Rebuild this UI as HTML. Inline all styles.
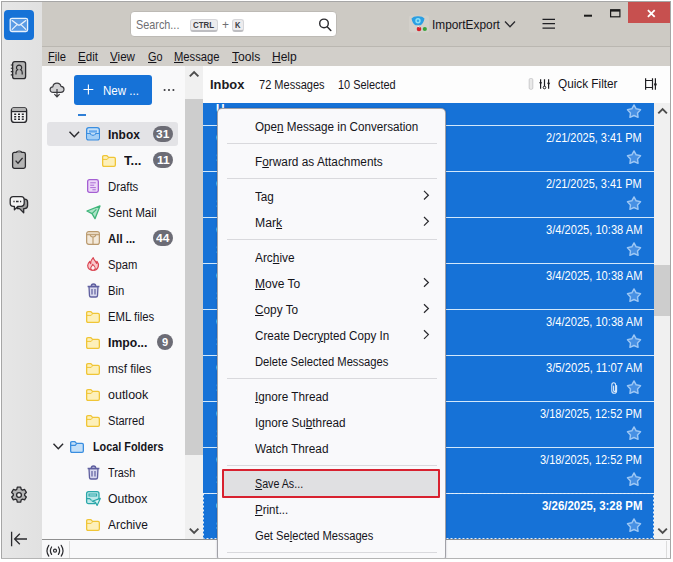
<!DOCTYPE html>
<html><head><meta charset="utf-8"><title>Inbox</title>
<style>
html,body{margin:0;padding:0;}
body{width:673px;height:562px;position:relative;overflow:hidden;background:#fff;font-family:"Liberation Sans",sans-serif;}
.a{position:absolute;}
.t{position:absolute;white-space:nowrap;line-height:16px;height:16px;transform-origin:0 50%;}
.t u{text-decoration:underline;text-underline-offset:1px;text-decoration-thickness:1px;}
svg{position:absolute;overflow:visible;}
#win{left:1px;top:1px;width:670px;height:558px;background:#a6a6a6;}
#spaces{left:2px;top:2px;width:40px;height:556px;background:linear-gradient(90deg,#e6e6e6,#e1e1e1);}
#title{left:42px;top:2px;width:628px;height:44px;background:#cdcac4;}
#menubar{left:42px;top:46px;width:628px;height:20px;background:#d2cfca;border-top:1px solid #bab7b1;box-sizing:border-box;}
#fpane{left:42px;top:66px;width:144px;height:474px;background:#f9f9fa;}
#fscroll{left:185.300px;top:66px;width:17.300px;height:474px;background:#f0f0f0;}
#fthumb{left:185.300px;top:99px;width:17.300px;height:356px;background:#cdcdcd;}
#hdr{left:203px;top:66px;width:467px;height:37px;background:#fdfdfd;}
#list{left:202.600px;top:103px;width:451.400px;height:437px;background:#1672d7;}
.sep{position:absolute;left:203px;width:451px;height:1px;background:#d2e8fb;}
#lscroll{left:654px;top:103px;width:16px;height:437px;background:#f0f0f0;}
#lthumb{left:654px;top:265px;width:16px;height:51px;background:#cdcdcd;}
#status{left:42px;top:539px;width:628px;height:19px;background:#f9f9fa;border-top:1px solid #8f8f8f;box-sizing:border-box;}
#search{left:130px;top:10.5px;width:207px;height:26px;background:#fff;border:1px solid #bdbab5;border-radius:4px;box-sizing:border-box;}
.kbd{background:#ececee;border:1px solid #d6d6d9;border-bottom:2px solid #bdbdc1;border-radius:3px;box-sizing:border-box;}
#close{left:628px;top:2px;width:42px;height:21px;background:#c7504f;}
#newbtn{left:74px;top:75px;width:78px;height:30px;background:#1672d7;border-radius:3px;}
#inboxrow{left:47px;top:122px;width:131px;height:24px;background:#e3e3e6;border-radius:3px;}
.badge{position:absolute;left:152.800px;width:20.200px;height:15.600px;border-radius:8px;background:#6c6c75;}
#menu{left:217px;top:108px;width:229px;height:453px;background:#f9f9fb;border:1px solid rgba(40,40,50,.42);border-radius:5px;box-sizing:border-box;box-shadow:0 0 2px 0 rgba(0,10,50,.25);}
.msep{position:absolute;left:227px;width:210px;height:1px;background:#d9d9dd;}
#saveas{left:221.800px;top:469.300px;width:218.400px;height:28.400px;background:#e0e0e2;border:2px solid #d8212f;box-sizing:border-box;border-radius:1px;}
#below{left:0;top:558px;width:673px;height:4px;background:#fff;border-top:1px solid #b4b4b4;box-sizing:border-box;}
#belowl{left:0;top:558px;width:1px;height:1px;background:#fff;}
#belowr{left:671px;top:558px;width:2px;height:1px;background:#fff;}

</style></head>
<body>
<div class="a" id="win"></div>
<div class="a" id="spaces"></div>
<div class="a" id="title"></div>
<div class="a" id="menubar"></div>
<div class="a" id="fpane"></div>
<div class="a" id="fscroll"></div>
<div class="a" id="fthumb"></div>
<div class="a" id="hdr"></div>
<div class="a" id="list"></div>
<div class="sep" style="top:125px"></div>
<div class="sep" style="top:171px"></div>
<div class="sep" style="top:217px"></div>
<div class="sep" style="top:263px"></div>
<div class="sep" style="top:309px"></div>
<div class="sep" style="top:355px"></div>
<div class="sep" style="top:401px"></div>
<div class="sep" style="top:447px"></div>
<div class="sep" style="top:493px"></div>
<div class="a" id="lscroll"></div>
<div class="a" id="lthumb"></div>
<div class="a" id="status"></div>
<div class="a" id="search"></div>
<div class="a kbd" style="left:189.5px;top:18.5px;width:28px;height:13px"></div>
<div class="a kbd" style="left:232px;top:18.5px;width:12px;height:13px"></div>
<div class="a" id="close"></div>
<div class="a" id="newbtn"></div>
<div class="a" id="inboxrow"></div>
<div class="badge" style="top:126px"></div>
<div class="badge" style="top:152.200px"></div>
<div class="badge" style="top:230.200px"></div>
<div class="badge" style="top:334.200px;left:156.900px;width:15.700px"></div>
<!-- mail space button -->
<div class="a" style="left:4px;top:10px;width:30px;height:30px;background:#1672d7;border-radius:4px"></div>
<svg style="left:9px;top:17px" width="20" height="16" viewBox="0 0 20 16"><rect x="1.2" y="1.3" width="17.4" height="13.2" rx="1.8" fill="#5a9be4" stroke="#e8f1fc" stroke-width="1.3"/><path d="M3.2 3.6 L8.6 7.6 Q10 8.5 11.4 7.6 L16.8 3.6 M3.2 12.4 L8 7.6 M16.8 12.4 L12 7.6" fill="none" stroke="#e8f1fc" stroke-width="1.3" stroke-linecap="round"/></svg>
<!-- address book -->
<svg style="left:10px;top:60px" width="18" height="20" viewBox="0 0 18 20"><rect x="2.6" y="1.6" width="13" height="17" rx="2.2" fill="#b4b4b4" stroke="#2a2a2e" stroke-width="1.3"/><path d="M0.8 5h2.4M0.8 8.3h2.4M0.8 11.6h2.4M0.8 14.9h2.4" stroke="#2a2a2e" stroke-width="1.1"/><path d="M6 14.6v-2.2q0-2 1.6-2.6a2.6 2.6 0 1 1 3 0q1.6.6 1.6 2.6v2.2" fill="none" stroke="#2a2a2e" stroke-width="1.2"/></svg>
<!-- calendar -->
<svg style="left:10px;top:106px" width="18" height="18" viewBox="0 0 18 18"><rect x="1.4" y="1.6" width="15.2" height="14.8" rx="3" fill="#f4f4f4" stroke="#2a2a2e" stroke-width="1.4"/><path d="M1.6 5.4h14.8" stroke="#2a2a2e" stroke-width="1.6"/><path d="M2 3.6q0-1.8 2-1.8h10q2 0 2 1.8v1.2H2z" fill="#b4b4b4"/><path d="M4.2 8.3h2M8 8.3h2M11.8 8.3h2M4.2 10.8h2M8 10.8h2M11.8 10.8h2M4.2 13.3h2M8 13.3h2M11.8 13.3h2" stroke="#2a2a2e" stroke-width="1.4"/></svg>
<!-- tasks -->
<svg style="left:11px;top:150px" width="16" height="20" viewBox="0 0 16 20"><rect x="1.6" y="2.4" width="12.8" height="16" rx="1.8" fill="#b4b4b4" stroke="#2a2a2e" stroke-width="1.3"/><path d="M5.4 2.6q0-1.6 2.6-1.6t2.6 1.6" fill="#e4e4e4" stroke="#2a2a2e" stroke-width="1.1"/><path d="M4.6 10.6l2.4 2.6 4.6-5.4" fill="none" stroke="#2a2a2e" stroke-width="1.3"/></svg>
<!-- chat -->
<svg style="left:9px;top:195px" width="20" height="20" viewBox="0 0 20 20"><path d="M13 4.200h2.600q3 0 3 3v3.400q0 3-3 3h-.9v4.200l-4.200-4.200H8z" fill="#a0a0a0" stroke="#2a2a2e" stroke-width="1.300" stroke-linejoin="round"/><path d="M4.200 1.700h8q3 0 3 3v3.600q0 3-3 3H9l-3.600 3.500v-3.500H4.200q-3 0-3-3V4.700q0-3 3-3z" fill="#f4f4f4" stroke="#2a2a2e" stroke-width="1.300" stroke-linejoin="round"/><path d="M4.400 6.500h1.200M7 6.500h2.600M11 6.500h1.200" stroke="#2a2a2e" stroke-width="1.300"/></svg>
<!-- gear -->
<svg style="left:10px;top:486px" width="18" height="18" viewBox="0 0 18 18"><path d="M7.300 1.200h3.400l.5 2.200 1.300.750 2.150-.7 1.700 2.950-1.650 1.500v1.500l1.650 1.500-1.700 2.950-2.150-.7-1.300.75-.5 2.200H7.300l-.5-2.200-1.300-.75-2.150.7-1.700-2.950 1.650-1.500v-1.500L1.650 6.400l1.700-2.950 2.150.7 1.300-.75z" fill="#b4b4b4" stroke="#2a2a2e" stroke-width="1.300" stroke-linejoin="round"/><circle cx="9" cy="9" r="2.400" fill="#ededed" stroke="#2a2a2e" stroke-width="1.300"/></svg>
<!-- collapse -->
<svg style="left:10px;top:531px" width="18" height="16" viewBox="0 0 18 16"><path d="M1.600 0.800v14.400M4.600 8h12.400M9.800 2.800L4.600 8l5.200 5.200" fill="none" stroke="#2a2a2e" stroke-width="1.300"/></svg>
<!-- cloud get messages -->
<svg style="left:49px;top:82px" width="16" height="16" viewBox="0 0 16 16"><path d="M4.300 10.300q-3.200 0-3.200-2.800 0-2.500 2.700-2.700.6-3.600 4.200-3.600 3.300 0 4 3.100 3 .2 3 3 0 3-3.300 3z" fill="#d2d2d4" stroke="#3a3a3e" stroke-width="1.200" stroke-linejoin="round"/><path d="M8 7v7.600M5.400 12.200L8 14.800l2.600-2.600" fill="none" stroke="#3a3a3e" stroke-width="1.200"/></svg>
<!-- plus -->
<svg style="left:83px;top:84px" width="11" height="11" viewBox="0 0 11 11"><path d="M5.400 0.600v9.800M0.500 5.500h9.800" stroke="#fff" stroke-width="1.100" fill="none"/></svg>
<!-- dots -->
<svg style="left:163px;top:88.300px" width="12" height="4" viewBox="0 0 12 4"><circle cx="1.600" cy="2" r="1.050" fill="#3a3a3e"/><circle cx="6" cy="2" r="1.050" fill="#3a3a3e"/><circle cx="10.400" cy="2" r="1.050" fill="#3a3a3e"/></svg>
<!-- blue dash -->
<div class="a" style="left:78px;top:114px;width:8px;height:1.500px;background:#2f7fd6"></div>
<!-- chevrons -->
<svg style="left:69px;top:131px" width="11" height="7" viewBox="0 0 11 7"><path d="M0.500 0.700L5.300 5.800 10.100 0.700" fill="none" stroke="#2a2a2e" stroke-width="1.400"/></svg>
<svg style="left:53px;top:443px" width="11" height="7" viewBox="0 0 11 7"><path d="M0.500 0.700L5.300 5.800 10.100 0.700" fill="none" stroke="#2a2a2e" stroke-width="1.400"/></svg>
<!-- inbox icon -->
<svg style="left:86px;top:127px" width="14" height="14" viewBox="0 0 14 14"><rect x="0.650" y="0.650" width="12.700" height="12.300" rx="2.200" fill="#c3dff8" stroke="#3a8ee0" stroke-width="1.300"/><path d="M3 3.300h8v2.300H3z" fill="#63a8ec"/><path d="M1 6.500h3.200q.3 1.800 2.800 1.800t2.800-1.800H13" fill="none" stroke="#3a8ee0" stroke-width="1.200"/><path d="M1.300 7.100h2.500q.6 1.800 3.200 1.800t3.200-1.800h2.500v4.200q0 1-1 1H2.300q-1 0-1-1z" fill="#a4cff5"/></svg>
<!-- folder T -->
<svg style="left:102px;top:154.500px" width="14" height="12" viewBox="0 0 14 12"><path d="M0.650 2q0-1.300 1.300-1.300h3l1.600 1.700h5.500q1.300 0 1.300 1.300v6.300q0 1.300-1.300 1.300H1.950q-1.300 0-1.300-1.300z" fill="#fdf0ba" stroke="#f0c536" stroke-width="1.300" stroke-linejoin="round"/><path d="M0.800 4.400h4.400l1.400-1.700" fill="none" stroke="#f0c536" stroke-width="1"/></svg>
<!-- drafts -->
<svg style="left:87px;top:179px" width="12" height="14" viewBox="0 0 12 14"><rect x="0.650" y="0.650" width="10.700" height="12.700" rx="1.800" fill="#ecd8f8" stroke="#a55fd3" stroke-width="1.300"/><path d="M3.200 3.800h5.600M3.200 6.200h4M3.200 8.600h5.600M5.400 10.800h3.400" stroke="#a55fd3" stroke-width="0.900"/></svg>
<!-- sent -->
<svg style="left:86px;top:205px" width="15" height="15" viewBox="0 0 15 15"><path d="M14 0.900L9 13.700 6 8.600 0.900 6z" fill="#aee4c8" stroke="#3fb57a" stroke-width="1.300" stroke-linejoin="round"/><path d="M6 8.600L10.400 4.400" stroke="#3fb57a" stroke-width="1.100"/></svg>
<!-- all mail -->
<svg style="left:86px;top:231px" width="14" height="14" viewBox="0 0 14 14"><rect x="0.650" y="0.650" width="12.700" height="12.700" rx="2.200" fill="#f3e9da" stroke="#b9986b" stroke-width="1.200"/><path d="M1 3.700h12" stroke="#b9986b" stroke-width="1.100"/><path d="M4.200 3.800q.2 2 2.800 2.300 2.600-.3 2.800-2.300M7 6.200v7" fill="none" stroke="#b9986b" stroke-width="1.100"/><path d="M1.600 2h10.800" stroke="#e2d0b4" stroke-width="1.300"/></svg>
<!-- spam -->
<svg style="left:87px;top:257px" width="12" height="14" viewBox="0 0 12 14"><path d="M6.200 0.700C6.600 3 8.800 4 9.600 6.400C10.100 5.700 10.200 5 10 4.300C11.500 6 11.700 8 11.300 9.500C10.700 11.900 8.900 13.300 6 13.300C3 13.300 0.700 11.400 0.700 8.600C0.700 6.600 1.900 5.200 2.800 4.300C2.800 5.400 3.100 6.200 3.700 6.600C3.700 4 4.700 2.200 6.200 0.700Z" fill="#f9c6ca" stroke="#da4552" stroke-width="1.200" stroke-linejoin="round"/><path d="M6 13.200C4.300 13.200 3.500 12 3.800 10.700C4.100 9.500 5.300 8.900 5.700 7.300C7.100 8.500 8.500 9.900 8.300 11.400C8.100 12.600 7.200 13.200 6 13.200Z" fill="#fdf3f4" stroke="#da4552" stroke-width="1.100" stroke-linejoin="round"/></svg>
<!-- bin -->
<svg style="left:87px;top:282.500px" width="13" height="15" viewBox="0 0 13 15"><path d="M2 3.600h9l-.5 9q-.1 1.400-1.500 1.400H4q-1.400 0-1.500-1.400z" fill="#d9d9ee" stroke="#5f5f9f" stroke-width="1.300" stroke-linejoin="round"/><path d="M0.600 3.500h11.800M4.200 3.300q0-2.300 2.300-2.300t2.300 2.300" fill="#c9c9e6" stroke="#5f5f9f" stroke-width="1.300"/><path d="M5 6v5.500M8 6v5.500" stroke="#5f5f9f" stroke-width="1.200"/></svg>
<!-- trash -->
<svg style="left:87px;top:465px" width="13" height="15" viewBox="0 0 13 15"><path d="M2 3.600h9l-.5 9q-.1 1.400-1.500 1.400H4q-1.400 0-1.500-1.400z" fill="#d9d9ee" stroke="#5f5f9f" stroke-width="1.300" stroke-linejoin="round"/><path d="M0.600 3.500h11.800M4.200 3.300q0-2.300 2.300-2.300t2.300 2.300" fill="#c9c9e6" stroke="#5f5f9f" stroke-width="1.300"/><path d="M5 6v5.500M8 6v5.500" stroke="#5f5f9f" stroke-width="1.200"/></svg>
<!-- outbox -->
<svg style="left:86px;top:491px" width="15" height="15" viewBox="0 0 15 15"><path d="M2.600 0.700h8.400q2 0 2 2v4.600L9 12.600H2.600q-2 0-2-2V2.700q0-2 2-2z" fill="#bfe9ea" stroke="#2ba7a9" stroke-width="1.300" stroke-linejoin="round"/><path d="M3 3h7.600v2H3zM0.800 7.600h3q.5 1.600 2.400 1.600" fill="none" stroke="#2ba7a9" stroke-width="1.100"/><path d="M14.300 7.400l-3.200 7-1.500-3-3.300-1.200z" fill="#dff5f5" stroke="#2ba7a9" stroke-width="1.200" stroke-linejoin="round"/></svg>
<!-- local folders -->
<svg style="left:70px;top:440.500px" width="14" height="12" viewBox="0 0 14 12"><path d="M0.650 2q0-1.300 1.300-1.300h3l1.600 1.700h5.500q1.300 0 1.300 1.300v6.300q0 1.300-1.300 1.300H1.950q-1.300 0-1.300-1.300z" fill="#c3dff8" stroke="#3a8ee0" stroke-width="1.300" stroke-linejoin="round"/><path d="M0.800 4.400h4.400l1.400-1.700" fill="none" stroke="#3a8ee0" stroke-width="1.100"/></svg>
<svg style="left:86px;top:310.5px" width="14" height="12" viewBox="0 0 14 12"><path d="M0.650 2q0-1.300 1.300-1.300h3l1.600 1.700h5.500q1.300 0 1.300 1.300v6.300q0 1.300-1.300 1.300H1.950q-1.300 0-1.300-1.300z" fill="#fdf0ba" stroke="#f0c536" stroke-width="1.300" stroke-linejoin="round"/><path d="M0.800 4.400h4.400l1.400-1.700" fill="none" stroke="#f0c536" stroke-width="1"/></svg>
<svg style="left:86px;top:336.5px" width="14" height="12" viewBox="0 0 14 12"><path d="M0.650 2q0-1.300 1.300-1.300h3l1.600 1.700h5.500q1.300 0 1.300 1.300v6.300q0 1.300-1.300 1.300H1.950q-1.300 0-1.300-1.300z" fill="#fdf0ba" stroke="#f0c536" stroke-width="1.300" stroke-linejoin="round"/><path d="M0.800 4.400h4.400l1.400-1.700" fill="none" stroke="#f0c536" stroke-width="1"/></svg>
<svg style="left:86px;top:362.5px" width="14" height="12" viewBox="0 0 14 12"><path d="M0.650 2q0-1.300 1.300-1.300h3l1.600 1.700h5.500q1.300 0 1.300 1.300v6.300q0 1.300-1.300 1.300H1.950q-1.300 0-1.300-1.300z" fill="#fdf0ba" stroke="#f0c536" stroke-width="1.300" stroke-linejoin="round"/><path d="M0.800 4.400h4.400l1.400-1.700" fill="none" stroke="#f0c536" stroke-width="1"/></svg>
<svg style="left:86px;top:388.5px" width="14" height="12" viewBox="0 0 14 12"><path d="M0.650 2q0-1.300 1.300-1.300h3l1.600 1.700h5.500q1.300 0 1.300 1.300v6.300q0 1.300-1.300 1.300H1.950q-1.300 0-1.300-1.300z" fill="#fdf0ba" stroke="#f0c536" stroke-width="1.300" stroke-linejoin="round"/><path d="M0.800 4.400h4.400l1.400-1.700" fill="none" stroke="#f0c536" stroke-width="1"/></svg>
<svg style="left:86px;top:414.5px" width="14" height="12" viewBox="0 0 14 12"><path d="M0.650 2q0-1.300 1.300-1.300h3l1.600 1.700h5.500q1.300 0 1.300 1.300v6.300q0 1.300-1.300 1.300H1.950q-1.300 0-1.300-1.300z" fill="#fdf0ba" stroke="#f0c536" stroke-width="1.300" stroke-linejoin="round"/><path d="M0.800 4.400h4.400l1.400-1.700" fill="none" stroke="#f0c536" stroke-width="1"/></svg>
<svg style="left:86px;top:518.5px" width="14" height="12" viewBox="0 0 14 12"><path d="M0.650 2q0-1.300 1.300-1.300h3l1.600 1.700h5.500q1.300 0 1.300 1.300v6.300q0 1.300-1.300 1.300H1.950q-1.300 0-1.300-1.300z" fill="#fdf0ba" stroke="#f0c536" stroke-width="1.300" stroke-linejoin="round"/><path d="M0.800 4.400h4.400l1.400-1.700" fill="none" stroke="#f0c536" stroke-width="1"/></svg>
<svg style="left:0;top:0" width="673" height="562" viewBox="0 0 673 562">
<polygon points="634.00,104.90 636.17,108.81 640.56,109.67 637.52,112.94 638.06,117.38 634.00,115.50 629.94,117.38 630.48,112.94 627.44,109.67 631.83,108.81" fill="#4790e3" stroke="#9dc7f4" stroke-width="1.4" stroke-linejoin="round"/>
<polygon points="634.00,150.90 636.17,154.81 640.56,155.67 637.52,158.94 638.06,163.38 634.00,161.50 629.94,163.38 630.48,158.94 627.44,155.67 631.83,154.81" fill="#4790e3" stroke="#9dc7f4" stroke-width="1.4" stroke-linejoin="round"/>
<polygon points="634.00,196.90 636.17,200.81 640.56,201.67 637.52,204.94 638.06,209.38 634.00,207.50 629.94,209.38 630.48,204.94 627.44,201.67 631.83,200.81" fill="#4790e3" stroke="#9dc7f4" stroke-width="1.4" stroke-linejoin="round"/>
<polygon points="634.00,242.90 636.17,246.81 640.56,247.67 637.52,250.94 638.06,255.38 634.00,253.50 629.94,255.38 630.48,250.94 627.44,247.67 631.83,246.81" fill="#4790e3" stroke="#9dc7f4" stroke-width="1.4" stroke-linejoin="round"/>
<polygon points="634.00,288.90 636.17,292.81 640.56,293.67 637.52,296.94 638.06,301.38 634.00,299.50 629.94,301.38 630.48,296.94 627.44,293.67 631.83,292.81" fill="#4790e3" stroke="#9dc7f4" stroke-width="1.4" stroke-linejoin="round"/>
<polygon points="634.00,334.90 636.17,338.81 640.56,339.67 637.52,342.94 638.06,347.38 634.00,345.50 629.94,347.38 630.48,342.94 627.44,339.67 631.83,338.81" fill="#4790e3" stroke="#9dc7f4" stroke-width="1.4" stroke-linejoin="round"/>
<polygon points="634.00,380.90 636.17,384.81 640.56,385.67 637.52,388.94 638.06,393.38 634.00,391.50 629.94,393.38 630.48,388.94 627.44,385.67 631.83,384.81" fill="#4790e3" stroke="#9dc7f4" stroke-width="1.4" stroke-linejoin="round"/>
<polygon points="634.00,426.90 636.17,430.81 640.56,431.67 637.52,434.94 638.06,439.38 634.00,437.50 629.94,439.38 630.48,434.94 627.44,431.67 631.83,430.81" fill="#4790e3" stroke="#9dc7f4" stroke-width="1.4" stroke-linejoin="round"/>
<polygon points="634.00,472.90 636.17,476.81 640.56,477.67 637.52,480.94 638.06,485.38 634.00,483.50 629.94,485.38 630.48,480.94 627.44,477.67 631.83,476.81" fill="#4790e3" stroke="#9dc7f4" stroke-width="1.4" stroke-linejoin="round"/>
<polygon points="634.00,518.90 636.17,522.81 640.56,523.67 637.52,526.94 638.06,531.38 634.00,529.50 629.94,531.38 630.48,526.94 627.44,523.67 631.83,522.81" fill="#4790e3" stroke="#9dc7f4" stroke-width="1.4" stroke-linejoin="round"/>
<path d="M616.6 385.500v5.200q0 2.600-2.400 2.600t-2.400-2.600v-5.600q0-2.300 1.900-2.300t1.900 2.300v5.300q0 1-1 1t-1-1v-4.400" fill="none" stroke="#d7e7fa" stroke-width="1.100" stroke-linecap="round"/>
<path d="M658.300 113.300L662.600 109l4.300 4.300" fill="none" stroke="#4c4c4c" stroke-width="1.900"/>
<path d="M658.300 528.700L662.600 533l4.300-4.300" fill="none" stroke="#4c4c4c" stroke-width="1.900"/>
<path d="M189.800 76.300L194.100 72l4.300 4.300" fill="none" stroke="#4c4c4c" stroke-width="1.900"/>
<path d="M189.800 528.700L194.100 533l4.300-4.300" fill="none" stroke="#4c4c4c" stroke-width="1.900"/>
<rect x="203.500" y="493.500" width="450" height="45" fill="none" stroke="#e6f0fb" stroke-width="1" stroke-dasharray="2 2"/>
<circle cx="324" cy="23.400" r="4.300" fill="none" stroke="#2a2a2e" stroke-width="1.400"/><path d="M327.200 26.700l3.600 3.700" stroke="#2a2a2e" stroke-width="1.500" stroke-linecap="round"/>
<rect x="409" y="15.500" width="20" height="17" rx="2" fill="#d3d0ca"/>
<path d="M411.500 18.500q2-2.500 6.500-2.300 4.500-.2 6.500 2.300-1 5-4 6.800h-5q-3-1.800-4-6.800z" fill="#2b9fe3"/><circle cx="418" cy="20.800" r="2.700" fill="#8fe0f7"/><circle cx="418" cy="20.800" r="1.200" fill="#36a8e6"/>
<circle cx="419" cy="29" r="2.300" fill="#d9202a"/><circle cx="424.800" cy="29" r="2.100" fill="#3aa43a"/><path d="M417.800 26l1.500 1.500" stroke="#f2f2f2" stroke-width="1"/>
<path d="M505 21.500l5 5.200 5-5.200" fill="none" stroke="#2a2a2e" stroke-width="1.300"/>
<path d="M542.500 19.300h12.500M542.500 23.700h12.500M542.500 28.100h12.500" stroke="#1f1f23" stroke-width="1.300"/>
<path d="M584 15.700h8" stroke="#1a1a1a" stroke-width="2"/>
<rect x="610.600" y="9.800" width="9.300" height="7" fill="none" stroke="#1a1a1a" stroke-width="1.200"/><path d="M610.600 10.600h9.300" stroke="#1a1a1a" stroke-width="2"/>
<path d="M647.900 10.100l6.800 6.800M654.700 10.100l-6.800 6.800" stroke="#fff" stroke-width="1.800"/>
<rect x="529.200" y="78.500" width="3.600" height="10.800" rx="1.300" fill="#e9e9e9" stroke="#c6c6c8" stroke-width="0.900"/>
<path d="M540.600 79.200v9.600M544.500 79.200v8M548.600 79.200v9.600" stroke="#1f1f23" stroke-width="1.200"/>
<path d="M539 82.200h3.200l-1.600 2.600zM547 82.800h3.200l-1.600 2.600z" fill="#1f1f23"/><circle cx="544.500" cy="87.500" r="1.300" fill="#fff" stroke="#1f1f23" stroke-width="1"/>
<path d="M645.600 78.200v2.300h6.900v-2.300M645.600 89.800v-2.300h6.900v2.300M645.600 80.500v7M652.500 80.500v7" fill="none" stroke="#1f1f23" stroke-width="1.200"/><path d="M655.400 78.200v11.600" stroke="#1f1f23" stroke-width="1.200"/><circle cx="655.400" cy="84.400" r="1.300" fill="#1f1f23"/>
<circle cx="55" cy="550.700" r="1.500" fill="none" stroke="#2a2a2e" stroke-width="1.200"/><path d="M51.600 547q-2.400 3.700 0 7.400M58.400 547q2.400 3.700 0 7.400M48.800 545.300q-3.600 5.400 0 10.800M61.200 545.300q3.600 5.400 0 10.800" fill="none" stroke="#2a2a2e" stroke-width="1.200" stroke-linecap="round"/>
<path d="M69.500 541v17M666.500 541v17" stroke="#dcdcdc" stroke-width="1"/>
</svg>

<div class="a" style="left:203px;top:103px;width:451px;height:437px;overflow:hidden"><div class="a" style="left:-203px;top:-103px;width:673px;height:562px">
<div class="t under" style="left:216.0px;top:100.5px;font-size:12px;font-weight:700;color:#ffffff;transform:scaleX(0.9802)">U</div>
<div class="t under" style="left:216.0px;top:130.2px;font-size:12px;font-weight:400;color:#ffffff;transform:scaleX(0.9456)">C</div>
<div class="t under" style="left:216.0px;top:149.5px;font-size:12px;font-weight:400;color:#e6f0fb;transform:scaleX(0.9606)">S</div>
<div class="t under" style="left:216.0px;top:176.2px;font-size:12px;font-weight:400;color:#ffffff;transform:scaleX(0.9456)">C</div>
<div class="t under" style="left:216.0px;top:195.5px;font-size:12px;font-weight:400;color:#e6f0fb;transform:scaleX(0.9606)">S</div>
<div class="t under" style="left:216.0px;top:222.2px;font-size:12px;font-weight:400;color:#ffffff;transform:scaleX(0.9456)">C</div>
<div class="t under" style="left:216.0px;top:241.5px;font-size:12px;font-weight:400;color:#e6f0fb;transform:scaleX(0.9606)">S</div>
<div class="t under" style="left:216.0px;top:268.2px;font-size:12px;font-weight:400;color:#ffffff;transform:scaleX(0.9456)">C</div>
<div class="t under" style="left:216.0px;top:287.5px;font-size:12px;font-weight:400;color:#e6f0fb;transform:scaleX(0.9606)">S</div>
<div class="t under" style="left:216.0px;top:314.2px;font-size:12px;font-weight:400;color:#ffffff;transform:scaleX(0.9456)">C</div>
<div class="t under" style="left:216.0px;top:333.5px;font-size:12px;font-weight:400;color:#e6f0fb;transform:scaleX(0.9606)">S</div>
<div class="t under" style="left:216.0px;top:360.2px;font-size:12px;font-weight:400;color:#ffffff;transform:scaleX(0.9456)">C</div>
<div class="t under" style="left:216.0px;top:379.5px;font-size:12px;font-weight:400;color:#e6f0fb;transform:scaleX(0.9606)">S</div>
<div class="t under" style="left:216.0px;top:406.2px;font-size:12px;font-weight:400;color:#ffffff;transform:scaleX(0.9456)">C</div>
<div class="t under" style="left:216.0px;top:425.5px;font-size:12px;font-weight:400;color:#e6f0fb;transform:scaleX(0.9606)">S</div>
<div class="t under" style="left:216.0px;top:452.2px;font-size:12px;font-weight:400;color:#ffffff;transform:scaleX(0.9456)">C</div>
<div class="t under" style="left:216.0px;top:471.5px;font-size:12px;font-weight:400;color:#e6f0fb;transform:scaleX(0.9606)">S</div>
<div class="t under" style="left:216.0px;top:498.2px;font-size:12px;font-weight:700;color:#ffffff;transform:scaleX(0.9456)">C</div>
<div class="t under" style="left:216.0px;top:517.5px;font-size:12px;font-weight:700;color:#e6f0fb;transform:scaleX(0.9606)">S</div>
</div></div>
<div class="a" id="menu"></div>
<div class="msep" style="top:143px"></div>
<div class="msep" style="top:178px"></div>
<div class="msep" style="top:239px"></div>
<div class="msep" style="top:378px"></div>
<div class="msep" style="top:465px"></div>
<div class="msep" style="top:552px"></div>
<div class="a" id="saveas"></div>
<svg style="left:0;top:0" width="673" height="562" viewBox="0 0 673 562">
<path d="M424 190.9l4.400 4.300-4.400 4.300" fill="none" stroke="#2a2a2e" stroke-width="1.200"/>
<path d="M424 217.0l4.400 4.300-4.400 4.300" fill="none" stroke="#2a2a2e" stroke-width="1.200"/>
<path d="M424 278.2l4.400 4.300-4.400 4.300" fill="none" stroke="#2a2a2e" stroke-width="1.200"/>
<path d="M424 304.2l4.400 4.300-4.400 4.300" fill="none" stroke="#2a2a2e" stroke-width="1.200"/>
<path d="M424 330.3l4.400 4.300-4.400 4.300" fill="none" stroke="#2a2a2e" stroke-width="1.200"/>
</svg>

<div class="a" id="below"></div><div class="a" id="belowl"></div><div class="a" id="belowr"></div>

<!-- texts -->
<div class="t " style="left:48.0px;top:49.0px;font-size:12px;font-weight:400;color:#15141a;transform:scaleX(0.9298)"><u>F</u>ile</div>
<div class="t " style="left:78.0px;top:49.0px;font-size:12px;font-weight:400;color:#15141a;transform:scaleX(0.9660)"><u>E</u>dit</div>
<div class="t " style="left:110.0px;top:49.0px;font-size:12px;font-weight:400;color:#15141a;transform:scaleX(0.9685)"><u>V</u>iew</div>
<div class="t " style="left:147.5px;top:49.0px;font-size:12px;font-weight:400;color:#15141a;transform:scaleX(0.9045)"><u>G</u>o</div>
<div class="t " style="left:174.4px;top:49.0px;font-size:12px;font-weight:400;color:#15141a;transform:scaleX(0.9363)"><u>M</u>essage</div>
<div class="t " style="left:231.8px;top:49.0px;font-size:12px;font-weight:400;color:#15141a;transform:scaleX(1.0066)"><u>T</u>ools</div>
<div class="t " style="left:272.0px;top:49.0px;font-size:12px;font-weight:400;color:#15141a;transform:scaleX(1.0005)"><u>H</u>elp</div>
<div class="t " style="left:136.4px;top:16.5px;font-size:13px;font-weight:400;color:#6f6f73;transform:scaleX(0.8341)">Search...</div>
<div class="t " style="left:193.0px;top:17.0px;font-size:8.5px;font-weight:700;color:#3a3a3e;transform:scaleX(0.9263)">CTRL</div>
<div class="t " style="left:221.5px;top:16.5px;font-size:12px;font-weight:400;color:#6f6f73;transform:scaleX(0.9978)">+</div>
<div class="t " style="left:235.0px;top:17.0px;font-size:8.5px;font-weight:700;color:#3a3a3e;transform:scaleX(0.8957)">K</div>
<div class="t " style="left:431.6px;top:16.9px;font-size:13px;font-weight:400;color:#15141a;transform:scaleX(0.9124)">ImportExport</div>
<div class="t " style="left:103.0px;top:82.5px;font-size:13px;font-weight:400;color:#ffffff;transform:scaleX(0.8896)">New ...</div>
<div class="t " style="left:108.2px;top:126.7px;font-size:12px;font-weight:700;color:#15141a;transform:scaleX(0.9937)">Inbox</div>
<div class="t " style="left:156.3px;top:125.9px;font-size:11px;font-weight:700;color:#ffffff;transform:scaleX(1.0857)">31</div>
<div class="t " style="left:124.0px;top:152.5px;font-size:12px;font-weight:700;color:#15141a;transform:scaleX(1.0927)">T...</div>
<div class="t " style="left:156.6px;top:152.1px;font-size:11px;font-weight:700;color:#ffffff;transform:scaleX(1.0996)">11</div>
<div class="t " style="left:108.2px;top:178.5px;font-size:12px;font-weight:400;color:#15141a;transform:scaleX(0.9464)">Drafts</div>
<div class="t " style="left:108.2px;top:204.5px;font-size:12px;font-weight:400;color:#15141a;transform:scaleX(0.9694)">Sent Mail</div>
<div class="t " style="left:108.2px;top:230.5px;font-size:12px;font-weight:700;color:#15141a;transform:scaleX(0.9522)">All ...</div>
<div class="t " style="left:156.3px;top:230.1px;font-size:11px;font-weight:700;color:#ffffff;transform:scaleX(1.0857)">44</div>
<div class="t " style="left:108.2px;top:256.5px;font-size:12px;font-weight:400;color:#15141a;transform:scaleX(0.9343)">Spam</div>
<div class="t " style="left:108.2px;top:282.5px;font-size:12px;font-weight:400;color:#15141a;transform:scaleX(0.9398)">Bin</div>
<div class="t " style="left:108.2px;top:308.5px;font-size:12px;font-weight:400;color:#15141a;transform:scaleX(0.9467)">EML files</div>
<div class="t " style="left:108.2px;top:334.5px;font-size:12px;font-weight:700;color:#15141a;transform:scaleX(1.0162)">Impo...</div>
<div class="t " style="left:161.8px;top:334.1px;font-size:11px;font-weight:700;color:#ffffff;transform:scaleX(1.0122)">9</div>
<div class="t " style="left:108.2px;top:360.5px;font-size:12px;font-weight:400;color:#15141a;transform:scaleX(0.9837)">msf files</div>
<div class="t " style="left:108.2px;top:386.5px;font-size:12px;font-weight:400;color:#15141a;transform:scaleX(1.0413)">outlook</div>
<div class="t " style="left:108.2px;top:412.5px;font-size:12px;font-weight:400;color:#15141a;transform:scaleX(0.9223)">Starred</div>
<div class="t " style="left:92.5px;top:438.5px;font-size:12px;font-weight:700;color:#15141a;transform:scaleX(0.9035)">Local Folders</div>
<div class="t " style="left:108.2px;top:464.5px;font-size:12px;font-weight:400;color:#15141a;transform:scaleX(0.9029)">Trash</div>
<div class="t " style="left:108.2px;top:490.5px;font-size:12px;font-weight:400;color:#15141a;transform:scaleX(1.0154)">Outbox</div>
<div class="t " style="left:108.2px;top:516.5px;font-size:12px;font-weight:400;color:#15141a;transform:scaleX(0.9946)">Archive</div>
<div class="t " style="left:209.6px;top:76.5px;font-size:13.5px;font-weight:700;color:#1c1b22;transform:scaleX(0.9528)">Inbox</div>
<div class="t " style="left:259.2px;top:76.5px;font-size:12px;font-weight:400;color:#15141a;transform:scaleX(0.9191)">72 Messages</div>
<div class="t " style="left:337.7px;top:76.5px;font-size:12px;font-weight:400;color:#15141a;transform:scaleX(0.9102)">10 Selected</div>
<div class="t " style="left:558.2px;top:76.4px;font-size:12px;font-weight:400;color:#15141a;transform:scaleX(0.9804)">Quick Filter</div>
<div class="t " style="left:255.3px;top:118.7px;font-size:12px;font-weight:400;color:#15141a;transform:scaleX(0.9713)">Ope<u>n</u> Message in Conversation</div>
<div class="t " style="left:255.3px;top:153.7px;font-size:12px;font-weight:400;color:#15141a;transform:scaleX(0.9867)">F<u>o</u>rward as Attachments</div>
<div class="t " style="left:255.3px;top:188.5px;font-size:12px;font-weight:400;color:#15141a;transform:scaleX(0.9763)">Tag</div>
<div class="t " style="left:255.3px;top:214.7px;font-size:12px;font-weight:400;color:#15141a;transform:scaleX(1.0161)">Mar<u>k</u></div>
<div class="t " style="left:255.3px;top:249.8px;font-size:12px;font-weight:400;color:#15141a;transform:scaleX(0.9892)">Arc<u>h</u>ive</div>
<div class="t " style="left:255.3px;top:275.9px;font-size:12px;font-weight:400;color:#15141a;transform:scaleX(1.0035)"><u>M</u>ove To</div>
<div class="t " style="left:255.3px;top:302.0px;font-size:12px;font-weight:400;color:#15141a;transform:scaleX(0.9837)"><u>C</u>opy To</div>
<div class="t " style="left:255.3px;top:328.0px;font-size:12px;font-weight:400;color:#15141a;transform:scaleX(0.9666)">Create Decr<u>y</u>pted Copy In</div>
<div class="t " style="left:255.3px;top:354.2px;font-size:12px;font-weight:400;color:#15141a;transform:scaleX(0.9345)">Delete Selected Messages</div>
<div class="t " style="left:255.3px;top:388.8px;font-size:12px;font-weight:400;color:#15141a;transform:scaleX(0.9776)"><u>I</u>gnore Thread</div>
<div class="t " style="left:255.3px;top:414.8px;font-size:12px;font-weight:400;color:#15141a;transform:scaleX(0.9767)">Ignore Su<u>b</u>thread</div>
<div class="t " style="left:255.3px;top:440.6px;font-size:12px;font-weight:400;color:#15141a;transform:scaleX(0.9839)">Watch Thread</div>
<div class="t " style="left:255.3px;top:475.8px;font-size:12px;font-weight:400;color:#15141a;transform:scaleX(0.8900)"><u>S</u>ave As...</div>
<div class="t " style="left:255.3px;top:501.8px;font-size:12px;font-weight:400;color:#15141a;transform:scaleX(0.9571)"><u>P</u>rint...</div>
<div class="t " style="left:255.3px;top:527.9px;font-size:12px;font-weight:400;color:#15141a;transform:scaleX(0.9292)">Get Se<u>l</u>ected Messages</div>
<div class="t " style="left:546.3px;top:130.2px;font-size:12px;font-weight:400;color:#ffffff;transform:scaleX(0.9126)">2/21/2025, 3:41 PM</div>
<div class="t " style="left:546.3px;top:176.2px;font-size:12px;font-weight:400;color:#ffffff;transform:scaleX(0.9126)">2/21/2025, 3:41 PM</div>
<div class="t " style="left:545.5px;top:222.2px;font-size:12px;font-weight:400;color:#ffffff;transform:scaleX(0.9261)">3/4/2025, 10:38 AM</div>
<div class="t " style="left:545.5px;top:268.2px;font-size:12px;font-weight:400;color:#ffffff;transform:scaleX(0.9261)">3/4/2025, 10:38 AM</div>
<div class="t " style="left:545.5px;top:314.2px;font-size:12px;font-weight:400;color:#ffffff;transform:scaleX(0.9261)">3/4/2025, 10:38 AM</div>
<div class="t " style="left:545.5px;top:360.2px;font-size:12px;font-weight:400;color:#ffffff;transform:scaleX(0.9341)">3/5/2025, 11:07 AM</div>
<div class="t " style="left:540.0px;top:406.2px;font-size:12px;font-weight:400;color:#ffffff;transform:scaleX(0.9145)">3/18/2025, 12:52 PM</div>
<div class="t " style="left:540.0px;top:452.2px;font-size:12px;font-weight:400;color:#ffffff;transform:scaleX(0.9145)">3/18/2025, 12:52 PM</div>
<div class="t " style="left:541.5px;top:498.2px;font-size:12px;font-weight:700;color:#ffffff;transform:scaleX(0.9525)">3/26/2025, 3:28 PM</div>
</body></html>
